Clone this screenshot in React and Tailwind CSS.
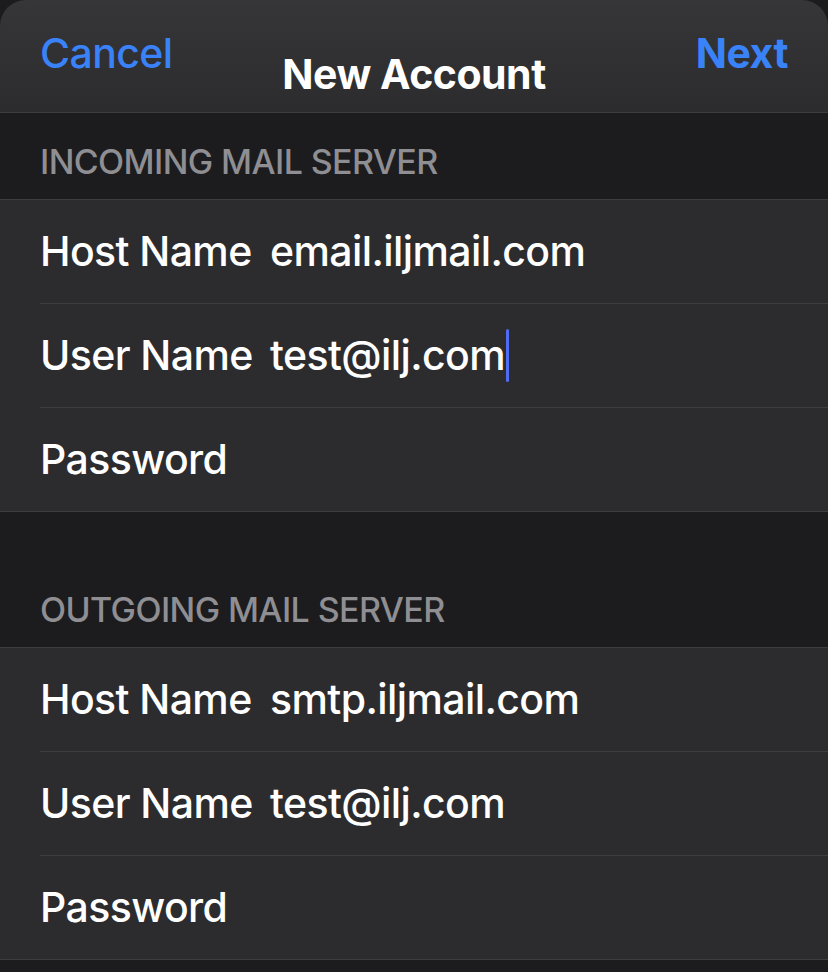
import React from "react";

const font = { fontFamily: "Inter, 'Liberation Sans', sans-serif" };

function Row({ label, value, cursor, last }) {
    return (
        <div className="bg-[#2c2c2e] pl-10">
            <div
                className={`flex items-center ${last ? "h-[103px]" : "h-[104px] border-b border-[#3d3d41]"}`}
            >
                <span className="w-[230px] text-[41px] font-medium text-white tracking-[-0.6px]">
                    {label}
                </span>
                <span className="text-[41px] font-medium text-white tracking-[-0.6px] flex items-center">
                    {value}
                    {cursor && (
                        <span className="inline-block w-[3px] h-[53px] bg-[#4f6cf5] rounded-sm ml-[1px]" />
                    )}
                </span>
            </div>
        </div>
    );
}

function Section({ title, rows, tall }) {
    return (
        <div>
            <div
                className={`bg-[#1c1c1e] border-b border-[#3d3d41] px-10 flex items-end pb-[12px] ${tall ? "h-[136px]" : "h-[87px]"}`}
            >
                <span className="text-[34px] font-medium text-[#8e8e93] tracking-[-0.6px]">
                    {title}
                </span>
            </div>
            <div className="border-b border-[#3d3d41]">
                {rows.map((r, i) => (
                    <Row key={i} {...r} last={i === rows.length - 1} />
                ))}
            </div>
        </div>
    );
}

export default function App() {
    return (
        <div className="w-[828px] h-[972px] bg-[#1c1c1e] overflow-hidden" style={font}>
            {/* Header */}
            <div className="h-[113px] bg-gradient-to-b from-[#363638] to-[#2c2c2e] rounded-t-[26px] border-b border-[#3d3d41] grid grid-cols-[1fr_auto_1fr] items-start px-10">
                <span className="text-[41px] font-medium text-[#3a82f7] mt-[23px] tracking-[-0.6px]">
                    Cancel
                </span>
                <span className="text-[41px] font-bold text-white mt-[44px] tracking-[-0.5px]">
                    New Account
                </span>
                <span className="text-[41px] font-bold text-[#3a82f7] mt-[23px] tracking-[-0.5px] text-right">
                    Next
                </span>
            </div>

            <Section
                title="INCOMING MAIL SERVER"
                rows={[
                    { label: "Host Name", value: "email.iljmail.com" },
                    { label: "User Name", value: "test@ilj.com", cursor: true },
                    { label: "Password", value: "" },
                ]}
            />
            <Section
                title="OUTGOING MAIL SERVER"
                tall
                rows={[
                    { label: "Host Name", value: "smtp.iljmail.com" },
                    { label: "User Name", value: "test@ilj.com" },
                    { label: "Password", value: "" },
                ]}
            />
        </div>
    );
}
